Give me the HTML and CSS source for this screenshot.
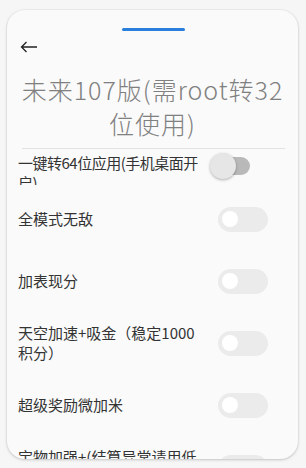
FILE: index.html
```html
<!DOCTYPE html>
<html lang="zh">
<head>
<meta charset="utf-8">
<link rel="stylesheet" href="styles.css">
</head>
<body>
<div class="card">
  <div class="handle"></div>
  <div class="back">
    <svg width="18" height="12" viewBox="0 0 18 12"><path d="M17 6H1.5M6.5 1L1.5 6l5 5" fill="none" stroke="#222" stroke-width="1.3"/></svg>
  </div>
  <h1 class="title">未来107版(需root转32位使用)</h1>
  <div class="divider"></div>
  <div class="row first">
    <div class="label clip">一键转64位应用(手机桌面开启)</div>
    <div class="switch pressed"><span class="track"></span><span class="thumb"></span></div>
  </div>
  <div class="row">
    <div class="label">全模式无敌</div>
    <div class="switch"><span class="thumb"></span></div>
  </div>
  <div class="row">
    <div class="label">加表现分</div>
    <div class="switch"><span class="thumb"></span></div>
  </div>
  <div class="row">
    <div class="label">天空加速+吸金（稳定1000积分）</div>
    <div class="switch"><span class="thumb"></span></div>
  </div>
  <div class="row">
    <div class="label">超级奖励微加米</div>
    <div class="switch"><span class="thumb"></span></div>
  </div>
  <div class="row">
    <div class="label">宝物加强+(结算异常请用低版本)</div>
    <div class="switch"><span class="thumb"></span></div>
  </div>
</div>
</body>
</html>
```
FILE: styles.css
```css
html, body {
  margin: 0;
  padding: 0;
  background: #f6f6f6;
  font-family: "Noto Sans CJK SC", "Noto Sans", sans-serif;
}
body {
  padding: 10px 8px 9px 7px;
  height: 468px;
  box-sizing: border-box;
}
.card {
  height: 449px;
  background: #fafafa;
  border-radius: 18px;
  box-shadow: 0 1px 3px rgba(0,0,0,0.18), 0 0 0 1px rgba(0,0,0,0.03);
  overflow: hidden;
  padding-top: 18px;
  box-sizing: border-box;
}
.handle {
  width: 63px;
  height: 3px;
  border-radius: 2px;
  background: #2a7edc;
  margin-left: 115px;
}
.back {
  height: 12px;
  margin-top: 10px;
  padding-left: 13px;
  display: flex;
}
.title {
  margin: 19px 10px 0;
  font-size: 25px;
  font-weight: 300;
  line-height: 34px;
  letter-spacing: 1px;
  color: #808080;
  text-align: center;
}
.divider {
  height: 1px;
  background: #e2e2e2;
  margin: 8px 13px 1px 15px;
}
.row {
  height: 62px;
  display: flex;
  align-items: center;
  padding-left: 11px;
}
.row.first {
  height: 38px;
  align-items: flex-start;
}
.label {
  flex: 0 0 190px;
  font-size: 15px;
  line-height: 20px;
  color: #333;
}
.label.clip {
  max-height: 32px;
  overflow: hidden;
  margin-top: 3px;
  letter-spacing: -0.5px;
}
.switch {
  position: relative;
  width: 50px;
  height: 25px;
  margin-left: 10px;
  border-radius: 13px;
  background: #ebebeb;
}
.switch .thumb {
  position: absolute;
  left: 4px;
  top: 4.5px;
  width: 16px;
  height: 16px;
  border-radius: 50%;
  background: #fff;
}
.switch.pressed {
  background: transparent;
  margin-top: 4px;
}
.switch.pressed .track {
  position: absolute;
  left: 4px;
  top: 3px;
  width: 28px;
  height: 18px;
  border-radius: 9px;
  background: #b9b9b9;
}
.switch.pressed .thumb {
  left: -8px;
  top: -1px;
  width: 26px;
  height: 26px;
  background: #e6e6e6;
  box-shadow: 0 1px 3px rgba(0,0,0,0.3);
}
```
